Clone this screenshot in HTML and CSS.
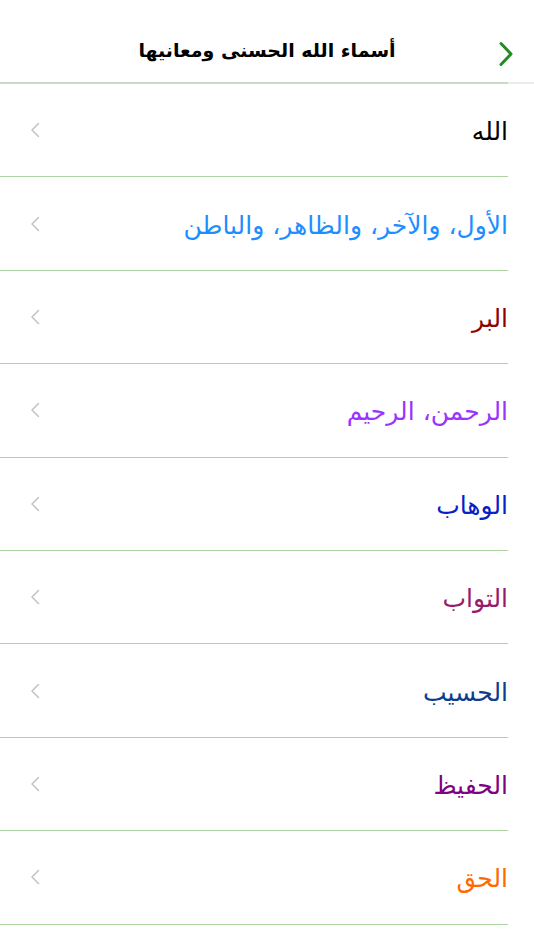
FILE: index.html
```html
<!DOCTYPE html>
<html lang="ar" dir="rtl">
<head>
<meta charset="utf-8">
<title>أسماء الله الحسنى ومعانيها</title>
<link rel="stylesheet" href="styles.css">
</head>
<body>
<div class="nav">
    <a class="back" href="javascript:;">
        <svg width="16" height="26" viewBox="0 0 16 26"><path d="M3 2.5 L13 13 L3 23.5" fill="none" stroke="#218c21" stroke-width="3" stroke-linecap="round" stroke-linejoin="round"/></svg>
    </a>
    <h1>أسماء الله الحسنى ومعانيها</h1>
</div>
<div class="navline"></div>
<ul class="names">
    <li class="c1"><span>الله</span><svg class="chev" viewBox="0 0 10 16"><path d="M8.5 1.5 L2 8 L8.5 14.5"/></svg></li>
    <li class="c2"><span>الأول، والآخر، والظاهر، والباطن</span><svg class="chev" viewBox="0 0 10 16"><path d="M8.5 1.5 L2 8 L8.5 14.5"/></svg></li>
    <li class="c3"><span>البر</span><svg class="chev" viewBox="0 0 10 16"><path d="M8.5 1.5 L2 8 L8.5 14.5"/></svg></li>
    <li class="c4"><span>الرحمن، الرحيم</span><svg class="chev" viewBox="0 0 10 16"><path d="M8.5 1.5 L2 8 L8.5 14.5"/></svg></li>
    <li class="c5"><span>الوهاب</span><svg class="chev" viewBox="0 0 10 16"><path d="M8.5 1.5 L2 8 L8.5 14.5"/></svg></li>
    <li class="c6"><span>التواب</span><svg class="chev" viewBox="0 0 10 16"><path d="M8.5 1.5 L2 8 L8.5 14.5"/></svg></li>
    <li class="c7"><span>الحسيب</span><svg class="chev" viewBox="0 0 10 16"><path d="M8.5 1.5 L2 8 L8.5 14.5"/></svg></li>
    <li class="c8"><span>الحفيظ</span><svg class="chev" viewBox="0 0 10 16"><path d="M8.5 1.5 L2 8 L8.5 14.5"/></svg></li>
    <li class="c9"><span>الحق</span><svg class="chev" viewBox="0 0 10 16"><path d="M8.5 1.5 L2 8 L8.5 14.5"/></svg></li>
</ul>
</body>
</html>
```
FILE: styles.css
```css
body,div,ul,li,h1{margin:0;padding:0;}
body{background:#fff;color:#000;font-family:"DejaVu Sans",sans-serif;width:534px;overflow:hidden;}
ul{list-style-type:none;}

.nav{position:relative;height:82px;display:flex;align-items:center;justify-content:center;padding-top:18px;box-sizing:border-box;}
.nav h1{font-size:19px;font-weight:bold;}
.back{position:absolute;right:20px;top:41px;display:block;line-height:0;}
.navline{height:2px;background:linear-gradient(to left,#ececec 26px,#c9dac9 26px);}

.names li{height:92.4px;width:508px;margin-right:26px;display:flex;align-items:center;justify-content:space-between;border-bottom:1px solid #acd5a3;}
.names span{font-size:25px;line-height:1;padding-top:3px;}
/* chevron of each row */
.chev{width:10px;height:16px;margin-left:30px;fill:none;stroke:#c4c4c9;stroke-width:1.6;stroke-linecap:round;stroke-linejoin:round;}

.c1{color:#000;}
.c2{color:#1e8eff;}
.c3{color:#8e0000;}
.c4{color:#9b33ff;}
.c5{color:#0a1ec4;}
.c6{color:#991a6b;}
.c7{color:#0d3d8c;}
.c8{color:#800080;}
.c9{color:#ff6a00;}
```
